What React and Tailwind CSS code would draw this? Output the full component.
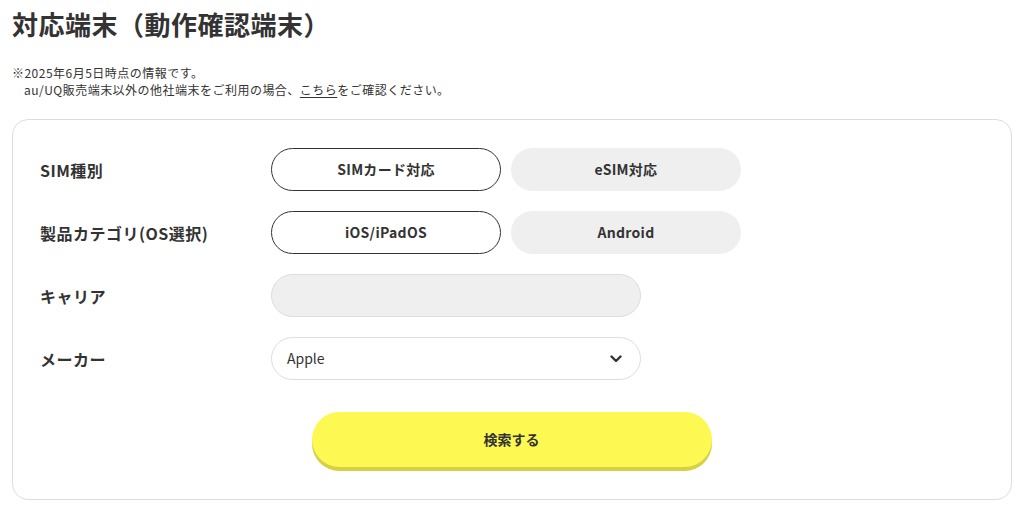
import React from "react";

const font = { fontFamily: '"Noto Sans CJK JP", "Noto Sans", sans-serif' };

const Choice = ({ label, active }) => (
  <button
    className={
      active
        ? "w-[230px] h-[43px] rounded-full border border-[#333] bg-white text-[14px] tracking-[0.02em] font-bold text-[#333]"
        : "w-[230px] h-[43px] rounded-full bg-[#efefef] text-[14px] tracking-[0.02em] font-bold text-[#333]"
    }
  >
    {label}
  </button>
);

const Row = ({ label, children }) => (
  <div className="flex items-center">
    <div className="w-[231px] text-[16px] tracking-[0.03em] font-bold text-[#333]">{label}</div>
    <div className="flex gap-[10px]">{children}</div>
  </div>
);

export default function App() {
  return (
    <div className="bg-white min-h-[530px] px-[12px] pt-[3px] text-[#333]" style={font}>
      {/* Title */}
      <h1 className="text-[26px] leading-[42px] font-bold tracking-[0.5px]">
        対応端末（動作確認端末）
      </h1>

      {/* Notes */}
      <div className="mt-[19px] text-[12px] leading-[17px] tracking-[0.04em]">
        <p>※2025年6月5日時点の情報です。</p>
        <p className="pl-[12px]">
          au/UQ販売端末以外の他社端末をご利用の場合、
          <a href="#" className="underline underline-offset-2">こちら</a>
          をご確認ください。
        </p>
      </div>

      {/* Search form */}
      <div className="mt-[21px] w-[1000px] rounded-[16px] border border-[#ddd] pl-[27px] pr-[28px] pt-[28px] pb-[32px]">
        <div className="flex flex-col gap-[20px]">
          <Row label="SIM種別">
            <Choice label="SIMカード対応" active />
            <Choice label="eSIM対応" />
          </Row>
          <Row label="製品カテゴリ(OS選択)">
            <Choice label="iOS/iPadOS" active />
            <Choice label="Android" />
          </Row>
          <Row label="キャリア">
            <div className="w-[370px] h-[43px] rounded-full border border-[#ddd] bg-[#efefef]" />
          </Row>
          <Row label="メーカー">
            <div className="w-[370px] h-[43px] rounded-full border border-[#ddd] bg-white flex items-center justify-between pl-[15px] pr-[18px]">
              <span className="text-[14px]">Apple</span>
              <svg width="12" height="8" viewBox="0 0 12 8" fill="none">
                <path d="M1.5 1.5 6 6l4.5-4.5" stroke="#333" strokeWidth="2.4" strokeLinecap="round" strokeLinejoin="round" />
              </svg>
            </div>
          </Row>
        </div>

        <div className="flex justify-center mt-[32px]">
          <button className="w-[400px] h-[55px] rounded-full bg-[#fdf852] shadow-[0_4px_0_#d5d046] text-[14px] font-bold text-[#333]">
            検索する
          </button>
        </div>
      </div>
    </div>
  );
}
